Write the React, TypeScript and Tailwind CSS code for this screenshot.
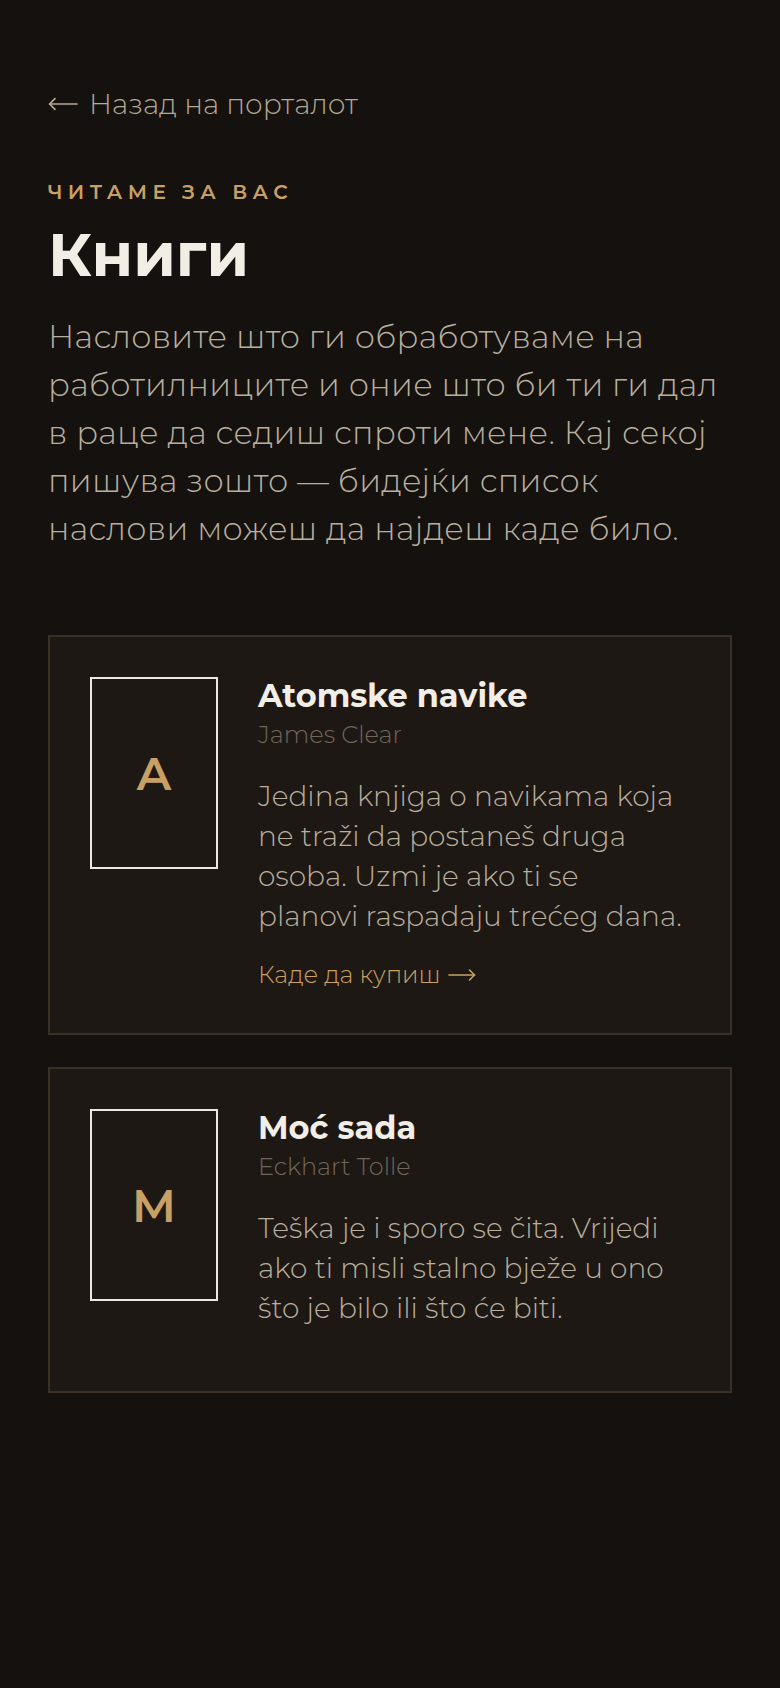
import React from "react";

const books = [
  {
    letter: "A",
    title: "Atomske navike",
    author: "James Clear",
    desc: "Jedina knjiga o navikama koja\nne traži da postaneš druga\nosoba. Uzmi je ako ti se\nplanovi raspadaju trećeg dana.",
    link: true,
  },
  {
    letter: "M",
    title: "Moć sada",
    author: "Eckhart Tolle",
    desc: "Teška je i sporo se čita. Vrijedi ako ti misli stalno bježe u ono što je bilo ili što će biti.",
    link: false,
  },
];

function Arrow({ left, className }: { left?: boolean; className?: string }) {
  return (
    <svg viewBox="0 0 28 12" className={className} fill="none" stroke="currentColor" strokeWidth="1.6" strokeLinecap="round" strokeLinejoin="round">
      {left ? (
        <>
          <path d="M27 6H1.5" />
          <path d="M6.5 1L1.5 6l5 5" />
        </>
      ) : (
        <>
          <path d="M1 6h25.5" />
          <path d="M21.5 1l5 5-5 5" />
        </>
      )}
    </svg>
  );
}

export default function App() {
  return (
    <div
      className="min-h-[1688px] bg-[#14110e] px-[48px] pt-[83px]"
      style={{ fontFamily: "Montserrat, Inter, 'Noto Sans', sans-serif" }}
    >
      <a className="flex items-center text-[28px] leading-[42px] font-light text-[#b3a995]">
        <Arrow left className="mr-[11px] h-[14px] w-[30px]" />
        Назад на порталот
      </a>
      <div className="mt-[52px] text-[20px] leading-[30px] font-semibold tracking-[0.27em] text-[#c9a064]">
        ЧИТАМЕ ЗА ВАС
      </div>
      <h1 className="mt-[15px] text-[60px] leading-[66px] font-bold text-[#f2eee6]">Книги</h1>
      <p className="mt-[25px] text-[32px] leading-[48px] font-light tracking-[0.01em] text-[#b9af9f]">
        Насловите што ги обработуваме на работилниците и оние што би ти ги дал в раце да седиш спроти мене. Кај секој пишува зошто — бидејќи список наслови можеш да најдеш каде било.
      </p>
      <div className="mt-[82px] flex flex-col gap-[32px]">
        {books.map((b) => (
          <div key={b.title} className="flex gap-[40px] border-2 border-[#3a3026] bg-[#1d1814] p-[40px]">
            <div className="flex h-[192px] w-[128px] shrink-0 items-center justify-center border-[2.5px] border-[#ebe8e3]">
              <span className="text-[46px] font-semibold text-[#c9a064]">{b.letter}</span>
            </div>
            <div className="min-w-0 flex-1">
              <h2 className="text-[32px] leading-[38px] font-bold text-[#f2eee6]">{b.title}</h2>
              <div className="mt-[2px] text-[24px] leading-[36px] font-light text-[#6f665b]">{b.author}</div>
              <p className="mt-[23px] whitespace-pre-line text-[28px] leading-[40px] font-light text-[#b9af9f]">{b.desc}</p>
              {b.link ? (
                <a className="mt-[21px] flex items-center text-[24px] leading-[36px] font-light text-[#c9a064]">
                  Каде да купиш
                  <Arrow className="ml-[8px] h-[12px] w-[28px]" />
                </a>
              ) : (
                <div className="h-[23px]" />
              )}
            </div>
          </div>
        ))}
      </div>
    </div>
  );
}
